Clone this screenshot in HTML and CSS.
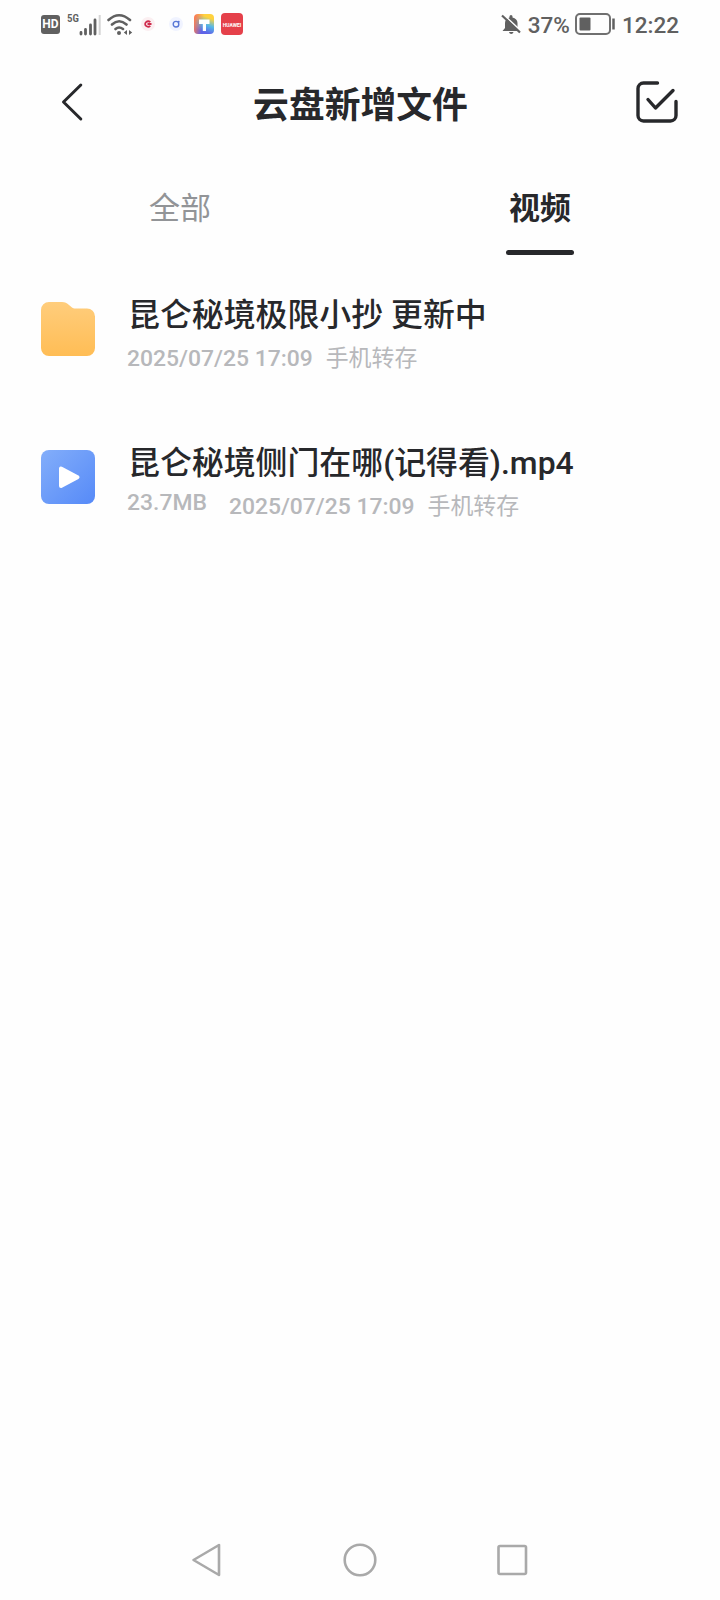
FILE: index.html
```
<!DOCTYPE html>
<html lang="zh-CN">
<head>
  <meta charset="UTF-8" />
  <meta name="viewport" content="width=device-width, initial-scale=1" />
  <title>云盘新增文件</title>
  <link rel="stylesheet" href="styles.css">
</head>
<body>
  <!-- Status bar -->
  <div class="status-bar">
    <div class="status-left">
      <span class="hd">HD</span>
      <span class="network">5G</span>
      <svg class="signal" width="22" height="22" viewBox="0 0 22 22">
        <path d="M2 18.500v1.500M6.500 15.500v4.500M11.500 11v9M16 6v14" stroke="#606060" stroke-width="2.800" stroke-linecap="round"/>
        <path d="M20.700 1v20" stroke="#d4d4d4" stroke-width="2"/>
      </svg>
      <svg class="wifi" width="26" height="23" viewBox="0 0 26 23">
        <path d="M1.500 7Q12 -2.500 23 7M5 11.500Q12 5 19.500 11.500M8.500 16Q12 13 16 16" fill="none" stroke="#606060" stroke-width="2.600" stroke-linecap="round"/>
        <circle cx="12" cy="20" r="2" fill="#606060"/>
        <path d="M20 17v5L16.800 19.500zM22 17v5l3.200-2.500z" fill="#606060"/>
      </svg>
      <svg class="app-dot" width="16" height="16" viewBox="0 0 16 16">
        <circle cx="8" cy="8" r="7" fill="#fbeff1"/>
        <path d="M10.300 6.200A3 2.600 0 1 0 10.300 9.800M7.500 8h4" fill="none" stroke="#cf2b4c" stroke-width="1.800"/>
      </svg>
      <svg class="app-ring" width="16" height="16" viewBox="0 0 16 16">
        <circle cx="8" cy="8" r="7" fill="#f0f3ff"/>
        <circle cx="8" cy="8.200" r="2.800" fill="none" stroke="#5877d6" stroke-width="1.400"/>
        <circle cx="10.700" cy="5.700" r="1" fill="#5877d6"/>
      </svg>
      <span class="app-theme">
        <svg width="20" height="20" viewBox="0 0 20 20">
          <path d="M5 5.500h10.500v4.500h-3.500v7H8.800V10H5z" fill="#fff"/>
        </svg>
      </span>
      <span class="app-huawei">HUAWEI</span>
    </div>
    <div class="status-right">
      <svg class="bell" width="21" height="21" viewBox="0 0 21 21">
        <path d="M1.500 17l2.500-3V9c0-3 2-5 4.500-5.600V2.500a1.500 1.500 0 0 1 3 0v.9C14.500 4 16.500 6 16.500 9v5l2.500 3zM8 18h4.500c-.5 2.500-4 2.500-4.500 0z" fill="#606060"/>
        <path d="M2.500 .5l18 17" stroke="#fefefe" stroke-width="1.600"/>
        <path d="M1 1.500l18 17" stroke="#606060" stroke-width="2.200"/>
      </svg>
      <span class="percent">37%</span>
      <svg class="battery" width="41" height="22" viewBox="0 0 41 22">
        <rect x="1" y="1" width="34" height="20" rx="4" fill="none" stroke="#707070" stroke-width="2"/>
        <rect x="4.500" y="4.500" width="11" height="13" rx="1" fill="#606060"/>
        <path d="M38.500 5.500v11" stroke="#606060" stroke-width="2.500"/>
      </svg>
      <span class="clock">12:22</span>
    </div>
  </div>

  <!-- Title bar -->
  <header class="title-bar">
    <svg class="back" width="24" height="40" viewBox="0 0 24 40">
      <path d="M20.800 3L3.500 20l17.300 17" fill="none" stroke="#27282b" stroke-width="3" stroke-linecap="round" stroke-linejoin="round"/>
    </svg>
    <h1>云盘新增文件</h1>
    <svg class="select" width="44" height="44" viewBox="0 0 44 44">
      <path d="M22.500 3H8.500A5.500 5.500 0 0 0 3 8.500V35.500A5.500 5.500 0 0 0 8.500 41h27a5.500 5.500 0 0 0 5.500-5.500V21.500M13 19.500l7.500 8.500L38 10.500" fill="none" stroke="#27282b" stroke-width="3.400" stroke-linecap="round" stroke-linejoin="round"/>
    </svg>
  </header>

  <!-- Tabs -->
  <nav class="tabs">
    <a class="tab">全部</a>
    <a class="tab active">视频</a>
  </nav>

  <!-- File list -->
  <main class="file-list">
    <div class="file">
      <svg class="file-icon" width="54" height="54" viewBox="0 0 54 54">
        <defs>
          <linearGradient id="folder" x1="0" y1="0" x2="0" y2="1">
            <stop offset="0" stop-color="#ffcd7c"/>
            <stop offset="1" stop-color="#ffbd55"/>
          </linearGradient>
        </defs>
        <path d="M8 0h13c3 0 5 1 7 3l3 2.500c1 .8 2 1 3 1h12a8 8 0 0 1 8 8V46a8 8 0 0 1-8 8H8a8 8 0 0 1-8-8V8a8 8 0 0 1 8-8z" fill="url(#folder)"/>
      </svg>
      <div class="file-info">
        <div class="file-name">昆仑秘境极限小抄 更新中</div>
        <div class="file-meta">
          <span class="date">2025/07/25 17:09</span>
          <span class="source">手机转存</span>
        </div>
      </div>
    </div>
    <div class="file">
      <svg class="file-icon" width="54" height="54" viewBox="0 0 54 54">
        <defs>
          <linearGradient id="video" x1="0" y1="0" x2="1" y2="1">
            <stop offset="0" stop-color="#83aefa"/>
            <stop offset="1" stop-color="#568af8"/>
          </linearGradient>
        </defs>
        <rect width="54" height="54" rx="8" fill="url(#video)"/>
        <path d="M20 18.500v17.500L36.500 27.200z" fill="#fff" stroke="#fff" stroke-width="4" stroke-linejoin="round"/>
      </svg>
      <div class="file-info">
        <div class="file-name">昆仑秘境侧门在哪(记得看).mp4</div>
        <div class="file-meta">
          <span class="size">23.7MB</span>
          <span class="date">2025/07/25 17:09</span>
          <span class="source">手机转存</span>
        </div>
      </div>
    </div>
  </main>

  <!-- System navigation -->
  <footer class="nav-bar">
    <svg width="32" height="36" viewBox="0 0 32 36">
      <path d="M28 3v30L2.500 18z" fill="none" stroke="#a9a9a9" stroke-width="2.600" stroke-linejoin="round"/>
    </svg>
    <svg width="36" height="36" viewBox="0 0 36 36">
      <circle cx="18" cy="18" r="15.300" fill="none" stroke="#a9a9a9" stroke-width="2.600"/>
    </svg>
    <svg width="32" height="36" viewBox="0 0 32 36">
      <rect x="1.500" y="4" width="27.500" height="28" rx="1.500" fill="none" stroke="#a9a9a9" stroke-width="2.600"/>
    </svg>
  </footer>
</body>
</html>
```

FILE: styles.css
```
* {
  box-sizing: border-box;
}

body {
  margin: 0;
  height: 1600px;
  display: flex;
  flex-direction: column;
  background: #fefefe;
  color: #27282b;
  font-family: Roboto, "Noto Sans CJK SC", sans-serif;
}

svg {
  display: block;
  flex: none;
}

.status-bar {
  height: 48px;
  padding: 0 41px;
  display: flex;
  justify-content: space-between;
  align-items: center;
  color: #606060;
}

.status-left,
.status-right {
  display: flex;
  align-items: center;
}

.hd {
  width: 19px;
  height: 19px;
  margin-top: 1px;
  border-radius: 3px;
  background: #606060;
  color: #fff;
  font-size: 12px;
  font-weight: 700;
  line-height: 19px;
  text-align: center;
}

.network {
  width: 12px;
  margin: 0 0 11px 7px;
  font-family: "Roboto Condensed", Roboto, sans-serif;
  font-size: 11px;
  font-weight: 600;
  line-height: 12px;
}

.signal {
  margin-top: 1px;
}

.wifi {
  margin: 1px 0 0 6px;
}

.app-dot {
  margin-left: 7px;
}

.app-ring {
  margin-left: 12px;
}

.app-theme {
  width: 20px;
  height: 20px;
  margin-left: 10px;
  border-radius: 4px;
  background: linear-gradient(100deg, #ff7a50 5%, transparent 45%), linear-gradient(200deg, #ffd23e 20%, #55b8e8 50%, #5f62e8 80%);
}

.app-huawei {
  width: 22px;
  height: 22px;
  margin-left: 7px;
  border-radius: 4px;
  background: #e5404a;
  color: #fff;
  font-size: 5px;
  font-weight: 700;
  line-height: 25px;
  text-align: center;
}

.percent,
.clock {
  font-size: 22.5px;
  font-weight: 500;
  line-height: 28px;
}

.percent {
  margin: 2px 5px 0 6px;
}

.clock {
  margin: 2px 0 0 6px;
}

.title-bar {
  height: 108px;
  padding: 0 41px 0 60px;
  display: flex;
  justify-content: space-between;
  align-items: center;
}

.title-bar h1 {
  margin: 7px 0 0 2px;
  font-size: 35.8px;
  font-weight: 700;
  line-height: 50px;
}

.tabs {
  height: 100px;
  display: grid;
  grid-template-columns: 1fr 1fr;
}

.tab {
  display: flex;
  flex-direction: column;
  align-items: center;
  padding-top: 30px;
  color: #929497;
  font-size: 31px;
  font-weight: 400;
  line-height: 46px;
}

.tab.active {
  color: #27282b;
  font-weight: 700;
}

.tab.active::after {
  content: "";
  width: 68px;
  height: 5px;
  margin-top: 18px;
  border-radius: 3px;
  background: #27282b;
}

.file-list {
  flex: 1;
  padding: 35px 41px 0;
}

.file {
  height: 148px;
  display: flex;
  align-items: flex-start;
  gap: 32px;
}

.file-icon {
  margin-top: 11px;
}

.file-name {
  padding: 1px 0 1px 1px;
  font-size: 31.9px;
  font-weight: 500;
  line-height: 46px;
  white-space: nowrap;
}

.file-meta {
  display: flex;
  align-items: baseline;
  color: #b7b8bb;
  font-size: 22.9px;
  font-weight: 500;
  line-height: 34px;
}

.size {
  align-self: flex-start;
  margin: -1px 22px 0 0;
}

.date {
  margin-top: 3px;
}

.source {
  margin-left: 13px;
  font-weight: 400;
}

.nav-bar {
  height: 80px;
  padding: 0 191px;
  display: flex;
  justify-content: space-between;
  align-items: center;
}
```
